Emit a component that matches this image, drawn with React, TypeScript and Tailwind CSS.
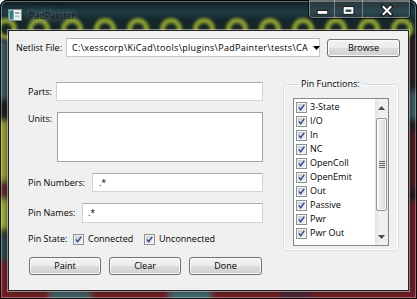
import React from "react";

function Check() {
  return (
    <svg width="11" height="11" viewBox="0 0 11 11" className="shrink-0">
      <defs>
        <linearGradient id="cbg" x1="0" y1="0" x2="1" y2="1">
          <stop offset="0" stopColor="#c4cad3" />
          <stop offset="1" stopColor="#f3f4f6" />
        </linearGradient>
      </defs>
      <rect x="0.5" y="0.5" width="10" height="10" fill="#f6f6f6" stroke="#8e8f8f" />
      <rect x="2" y="2" width="7" height="7" fill="url(#cbg)" />
      <path d="M2.8 5.4 L4.7 7.8 L8.3 2.6" stroke="#3a4f8e" strokeWidth="1.5" fill="none" />
    </svg>
  );
}

function Btn({ label, w }: { label: string; w: string }) {
  return (
    <div
      className={`h-[18px] ${w} shrink-0 rounded-[3px] border border-[#707070] bg-[linear-gradient(#f2f2f2_0%,#ebebeb_50%,#dddddd_50%,#cfcfcf_100%)] shadow-[inset_0_0_0_1px_#fbfbfb] flex items-center justify-center text-black`}
    >
      {label}
    </div>
  );
}

function FrameBg() {
  const rings = Array.from({ length: 13 }, (_, i) => 6 + 33 * i);
  return (
    <svg className="absolute inset-0" width="417" height="299" viewBox="0 0 417 299">
      <defs>
        <filter id="b1" x="-50%" y="-50%" width="200%" height="200%">
          <feGaussianBlur stdDeviation="1.6" />
        </filter>
        <filter id="b2" x="-50%" y="-50%" width="200%" height="200%">
          <feGaussianBlur stdDeviation="3" />
        </filter>
        <linearGradient id="topg" x1="0" y1="0" x2="0" y2="1">
          <stop offset="0" stopColor="#0e1a1e" />
          <stop offset="0.35" stopColor="#1f3d45" />
          <stop offset="0.6" stopColor="#14262b" />
          <stop offset="1" stopColor="#1a2a20" />
        </linearGradient>
      </defs>
      <rect width="417" height="299" fill="#1b1a1d" />
      <rect width="417" height="34" fill="url(#topg)" />
      <g filter="url(#b1)" opacity="0.85">
        {rings.map((x) => (
          <circle key={x} cx={x} cy={29} r={8.5} fill="none" stroke="#a2b432" strokeWidth={5} />
        ))}
      </g>
      <g filter="url(#b2)">
        <rect x="-4" y="40" width="12" height="60" fill="#3e5a5e" />
        <rect x="-4" y="120" width="12" height="60" fill="#9fa82e" />
        <rect x="-4" y="180" width="12" height="20" fill="#5e2a2a" />
        <rect x="-4" y="200" width="12" height="30" fill="#a2b035" />
        <rect x="-4" y="235" width="12" height="25" fill="#2e4a50" />
        <rect x="-4" y="262" width="12" height="40" fill="#7a1e28" />
        <rect x="0" y="290" width="417" height="14" fill="#6e1a24" />
        <rect x="50" y="290" width="40" height="14" fill="#3e5f66" />
        <rect x="170" y="290" width="40" height="14" fill="#3e6a70" />
        <rect x="280" y="290" width="30" height="14" fill="#4a2030" />
        <rect x="409" y="40" width="12" height="40" fill="#2a1a20" />
        <rect x="409" y="90" width="12" height="30" fill="#3a5a60" />
        <rect x="409" y="130" width="12" height="60" fill="#4a1a22" />
        <rect x="409" y="200" width="12" height="100" fill="#6a1a26" />
      </g>
    </svg>
  );
}

function CaptionButtons() {
  return (
    <div className="ml-auto mr-[6px] flex h-[19px] rounded-b-[5px] border border-t-0 border-[rgba(0,0,0,0.75)] bg-[linear-gradient(rgba(255,255,255,0.12),rgba(255,255,255,0.04))] shadow-[inset_0_0_0_1px_rgba(255,255,255,0.35)] overflow-hidden">
      <div className="w-[26px] h-full border-r border-[rgba(255,255,255,0.35)] flex items-center justify-center">
        <svg width="26" height="19" viewBox="0 0 26 19">
          <rect x="8.5" y="10.5" width="11" height="4" fill="#fff" stroke="#1a1a1a" strokeWidth="1" />
        </svg>
      </div>
      <div className="w-[28px] h-full border-r border-[rgba(255,255,255,0.35)] flex items-center justify-center">
        <svg width="28" height="19" viewBox="0 0 28 19">
          <rect x="8.5" y="6.5" width="11" height="8" fill="none" stroke="#1a1a1a" strokeWidth="1" />
          <rect x="10" y="8" width="8" height="5" fill="none" stroke="#fff" strokeWidth="2" />
          <rect x="10" y="8" width="8" height="1.5" fill="#fff" />
        </svg>
      </div>
      <div className="w-[47px] h-full flex items-center justify-center">
        <svg width="47" height="19" viewBox="0 0 47 19">
          <path d="M20 6.5 L28 14.5 M28 6.5 L20 14.5" stroke="#1a1a1a" strokeWidth="4" strokeLinecap="square" />
          <path d="M20.5 7 L27.5 14 M27.5 7 L20.5 14" stroke="#fff" strokeWidth="2" strokeLinecap="square" />
        </svg>
      </div>
    </div>
  );
}

const items = ["3-State", "I/O", "In", "NC", "OpenColl", "OpenEmit", "Out", "Passive", "Pwr", "Pwr Out"];

function ScrollBar() {
  return (
    <div className="w-[13px] h-full flex flex-col bg-[linear-gradient(90deg,#e3e3e3,#f2f2f2_40%,#ececec)]">
      <div className="h-[17px] flex items-center justify-center">
        <svg width="7" height="4" viewBox="0 0 7 4">
          <path d="M0 4 L3.5 0 L7 4 Z" fill="#4d4d4d" />
        </svg>
      </div>
      <div className="flex-1 flex flex-col pt-[2px]">
        <div className="h-[93px] mx-[1px] rounded-[2px] border border-[#959595] bg-[linear-gradient(90deg,#f4f4f4,#e8e8e8_50%,#d6d6d6)] shadow-[inset_0_0_0_1px_#fafafa] flex flex-col items-center justify-center gap-[1px]">
          <div className="w-[6px] h-[1px] bg-[#6b6b6b]" />
          <div className="w-[6px] h-[1px] bg-[#6b6b6b]" />
          <div className="w-[6px] h-[1px] bg-[#6b6b6b]" />
          <div className="w-[6px] h-[1px] bg-[#6b6b6b]" />
        </div>
      </div>
      <div className="h-[17px] flex items-center justify-center">
        <svg width="7" height="4" viewBox="0 0 7 4">
          <path d="M0 0 L3.5 4 L7 0 Z" fill="#4d4d4d" />
        </svg>
      </div>
    </div>
  );
}

export default function App() {
  const tb = "h-full flex-1 bg-white border border-[#d0d3d8] border-t-[#abadb3]";
  return (
    <div className="w-[417px] h-[299px] relative overflow-hidden rounded-t-[7px] font-['Open_Sans',sans-serif] text-[9px] leading-[12px] text-black">
      <FrameBg />
      <div className="absolute inset-0 rounded-t-[7px] border border-[rgba(0,0,0,0.8)] shadow-[inset_0_0_0_1px_rgba(255,255,255,0.35)]" />
      <div className="relative flex flex-col">
        <div className="h-[30px] flex items-start">
          <div className="ml-[8px] mt-[9px]">
            <svg width="14" height="12" viewBox="0 0 14 12">
              <rect x="0.5" y="0.5" width="13" height="11" fill="#d8dede" stroke="#7f8b8c" />
              <rect x="1.5" y="1.5" width="4" height="9" fill="#2a7f86" />
              <rect x="6" y="1.5" width="6.5" height="9" fill="#f4f7f7" />
              <rect x="7" y="3" width="4.5" height="2" fill="#9aa4a6" />
              <rect x="7" y="6.5" width="4.5" height="2" fill="#b8c0c2" />
            </svg>
          </div>
          <div className="ml-[7px] mt-[10px] text-[#111] [text-shadow:0_0_7px_rgba(200,215,215,0.8),0_0_12px_rgba(200,215,215,0.5)]">
            PadPainter
          </div>
          <CaptionButtons />
        </div>
        <div className="ml-[8px] w-[401px] h-[261px] bg-[#f0f0f0] border border-[#222] shadow-[0_0_0_1px_rgba(255,255,255,0.45)] flex flex-col">
          <div className="mt-[7px] ml-[7px] h-[19px] flex items-center">
            <div className="w-[50px] shrink-0">Netlist File:</div>
            <div className="w-[254px] h-[19px] bg-white border border-[#c8cace] border-t-[#abadb3] flex items-center">
              <div className="flex-1 whitespace-nowrap pl-[5px] tracking-[0.3px]">
                C:\xesscorp\KiCad\tools\plugins\PadPainter\tests\CA
              </div>
              <div className="w-[17px] h-full flex items-center justify-center shrink-0">
                <svg width="7" height="4" viewBox="0 0 7 4">
                  <path d="M0 0 L3.5 4 L7 0 Z" fill="#000" />
                </svg>
              </div>
            </div>
            <div className="ml-[7px]">
              <Btn label="Browse" w="w-[73px]" />
            </div>
          </div>
          <div className="mt-[25px] flex">
            <div className="ml-[19px] w-[235px] flex flex-col">
              <div className="h-[19px] flex items-center">
                <div className="w-[28px] shrink-0">Parts:</div>
                <div className={tb} />
              </div>
              <div className="mt-[11px] h-[50px] flex items-start">
                <div className="w-[29px] shrink-0 pt-[1px]">Units:</div>
                <div className="h-full flex-1 bg-white border border-[#9da0a5]" />
              </div>
              <div className="mt-[11px] h-[19px] flex items-center">
                <div className="w-[64px] shrink-0">Pin Numbers:</div>
                <div className={`${tb} flex items-center pl-[6px]`}>.*</div>
              </div>
              <div className="mt-[11px] h-[20px] flex items-center">
                <div className="w-[54px] shrink-0">Pin Names:</div>
                <div className={`${tb} flex items-center pl-[5px]`}>.*</div>
              </div>
              <div className="mt-[7px] h-[18px] flex items-center">
                <div className="w-[45px] shrink-0">Pin State:</div>
                <Check />
                <div className="ml-[4px] w-[56px] shrink-0">Connected</div>
                <Check />
                <div className="ml-[4px]">Unconnected</div>
              </div>
              <div className="mt-[9px] ml-[1px] flex gap-[8px]">
                <Btn label="Paint" w="w-[72px]" />
                <Btn label="Clear" w="w-[72px]" />
                <Btn label="Done" w="w-[73px]" />
              </div>
            </div>
            <fieldset className="ml-[20px] -mt-[4px] w-[115px] h-[173px] border border-[#d5dfe5] rounded-[3px] shadow-[inset_0_0_0_1px_#fff] px-[9px]">
              <legend className="ml-[6px] px-[2px]">Pin Functions:</legend>
              <div className="mt-[8px] w-[96px] h-[148px] bg-white border border-[#828790] flex">
                <div className="flex-1 flex flex-col pt-[1px]">
                  {items.map((t) => (
                    <div key={t} className="h-[14px] flex items-center pl-[2px]">
                      <Check />
                      <div className="ml-[3px] whitespace-nowrap">{t}</div>
                    </div>
                  ))}
                </div>
                <ScrollBar />
              </div>
            </fieldset>
          </div>
        </div>
      </div>
    </div>
  );
}
